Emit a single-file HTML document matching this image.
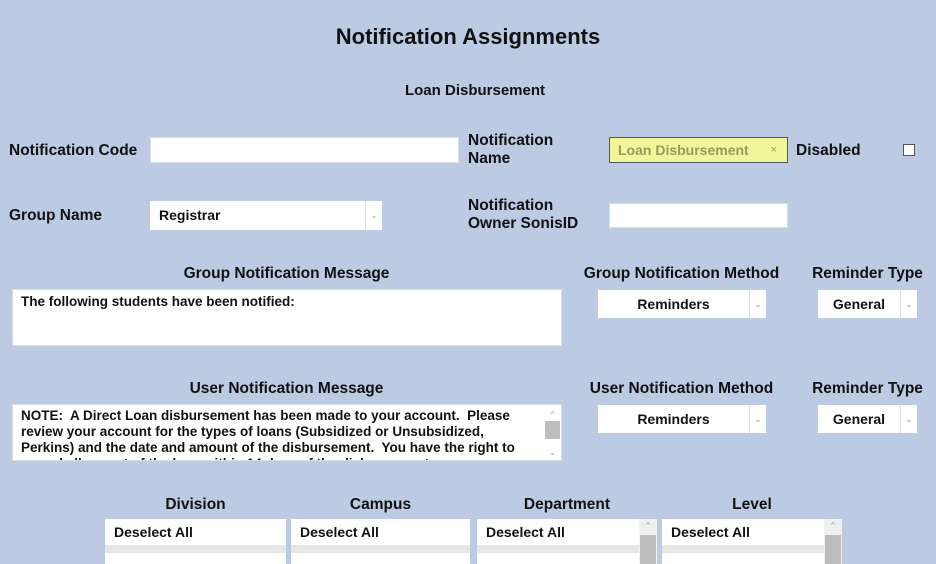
<!DOCTYPE html>
<html><head><style>
*{margin:0;padding:0;box-sizing:border-box}
body{width:936px;height:561px;overflow:hidden;background:#bccbe3;font-family:"Liberation Sans",Arial,sans-serif;font-weight:bold;color:#111;position:relative}
.a{position:absolute}
.t{font-size:15.5px}
.box{position:absolute;background:#fff;border:1px solid #d8dde6}
.sel{position:absolute;background:#fff;font-size:14px;text-align:center;line-height:27px}
.sel .ar{position:absolute;right:0;top:0;width:17px;height:100%;border-left:1px solid #ddd;color:#999;font-size:9px;line-height:27px;text-align:center;font-weight:normal}
.c{text-align:center}
.list{position:absolute;top:519px;height:45px;background:#fff;font-size:14px}
.list .h{height:26px;line-height:26px;padding-left:9px}
.list .g{height:8px;background:#e6e6e6}
.sb{position:absolute;right:0;top:0;width:18px;height:100%;background:#f0f0f0}
.sb .th{position:absolute;left:1px;right:1px;top:16px;bottom:0;background:#bdbdbd}
.sb .up{position:absolute;top:2px;width:100%;text-align:center;font-size:8px;color:#999;font-weight:normal}
</style></head><body>
<div class="a c" style="left:0;width:936px;top:24px;font-size:22px">Notification Assignments</div>
<div class="a c t" style="left:0;width:950px;top:82px;font-size:15px">Loan Disbursement</div>

<div class="a t" style="left:9px;top:142px">Notification Code</div>
<div class="box" style="left:150px;top:137px;width:309px;height:26px"></div>
<div class="a t" style="left:468px;top:132px;line-height:18px">Notification<br>Name</div>
<div class="a" style="left:609px;top:137px;width:179px;height:26px;background:#f3f59a;border:1px solid #556;font-size:14px;color:#9a9a55;line-height:24px;padding-left:8px;font-weight:bold">Loan Disbursement<span style="position:absolute;right:10px;font-weight:normal;font-size:11px">×</span></div>
<div class="a t" style="left:796px;top:142px">Disabled</div>
<div class="a" style="left:903px;top:144px;width:12px;height:12px;background:#fff;border:1px solid #555"></div>

<div class="a t" style="left:9px;top:207px">Group Name</div>
<div class="sel" style="left:150px;top:201px;width:232px;height:29px;text-align:left;padding-left:9px;line-height:29px">Registrar<div class="ar" style="line-height:29px">⌄</div></div>
<div class="a t" style="left:468px;top:197px;line-height:18px">Notification<br>Owner SonisID</div>
<div class="box" style="left:609px;top:203px;width:179px;height:25px"></div>

<div class="a c t" style="left:12px;width:549px;top:265px">Group Notification Message</div>
<div class="box" style="left:12px;top:289px;width:550px;height:57px;font-size:13.5px;padding:4px 8px">The following students have been notified:</div>
<div class="a c t" style="left:575px;width:213px;top:265px">Group Notification Method</div>
<div class="sel" style="left:598px;top:290px;width:168px;height:28px;line-height:28px;padding-right:17px">Reminders<div class="ar" style="line-height:28px">⌄</div></div>
<div class="a c t" style="left:805px;width:125px;top:265px">Reminder Type</div>
<div class="sel" style="left:818px;top:290px;width:99px;height:28px;line-height:28px;padding-right:17px">General<div class="ar" style="line-height:28px">⌄</div></div>

<div class="a c t" style="left:12px;width:549px;top:380px">User Notification Message</div>
<div class="box" style="left:12px;top:404px;width:550px;height:57px;font-size:13.5px;padding:3px 26px 0 8px;line-height:16px;overflow:hidden">NOTE:&nbsp; A Direct Loan disbursement has been made to your account.&nbsp; Please review your account for the types of loans (Subsidized or Unsubsidized, Perkins) and the date and amount of the disbursement.&nbsp; You have the right to cancel all or part of the loan within 14 days of the disbursement.
<div class="sb" style="width:17px;background:#fff"><div class="up">^</div><div style="position:absolute;left:1px;right:1px;top:16px;height:18px;background:#bdbdbd"></div><div class="up" style="top:40px">⌄</div></div></div>
<div class="a c t" style="left:575px;width:213px;top:380px">User Notification Method</div>
<div class="sel" style="left:598px;top:405px;width:168px;height:28px;line-height:28px;padding-right:17px">Reminders<div class="ar" style="line-height:28px">⌄</div></div>
<div class="a c t" style="left:805px;width:125px;top:380px">Reminder Type</div>
<div class="sel" style="left:818px;top:405px;width:99px;height:28px;line-height:28px;padding-right:17px">General<div class="ar" style="line-height:28px">⌄</div></div>

<div class="a c t" style="left:105px;width:181px;top:496px">Division</div>
<div class="a c t" style="left:291px;width:179px;top:496px">Campus</div>
<div class="a c t" style="left:477px;width:180px;top:496px">Department</div>
<div class="a c t" style="left:662px;width:180px;top:496px">Level</div>
<div class="list" style="left:105px;width:181px"><div class="h">Deselect All</div><div class="g"></div></div>
<div class="list" style="left:291px;width:179px"><div class="h">Deselect All</div><div class="g"></div></div>
<div class="list" style="left:477px;width:180px"><div class="h">Deselect All</div><div class="g" style="margin-right:18px"></div><div class="sb"><div class="up">^</div><div class="th"></div></div></div>
<div class="list" style="left:662px;width:180px"><div class="h">Deselect All</div><div class="g" style="margin-right:18px"></div><div class="sb"><div class="up">^</div><div class="th"></div></div></div>
</body></html>
